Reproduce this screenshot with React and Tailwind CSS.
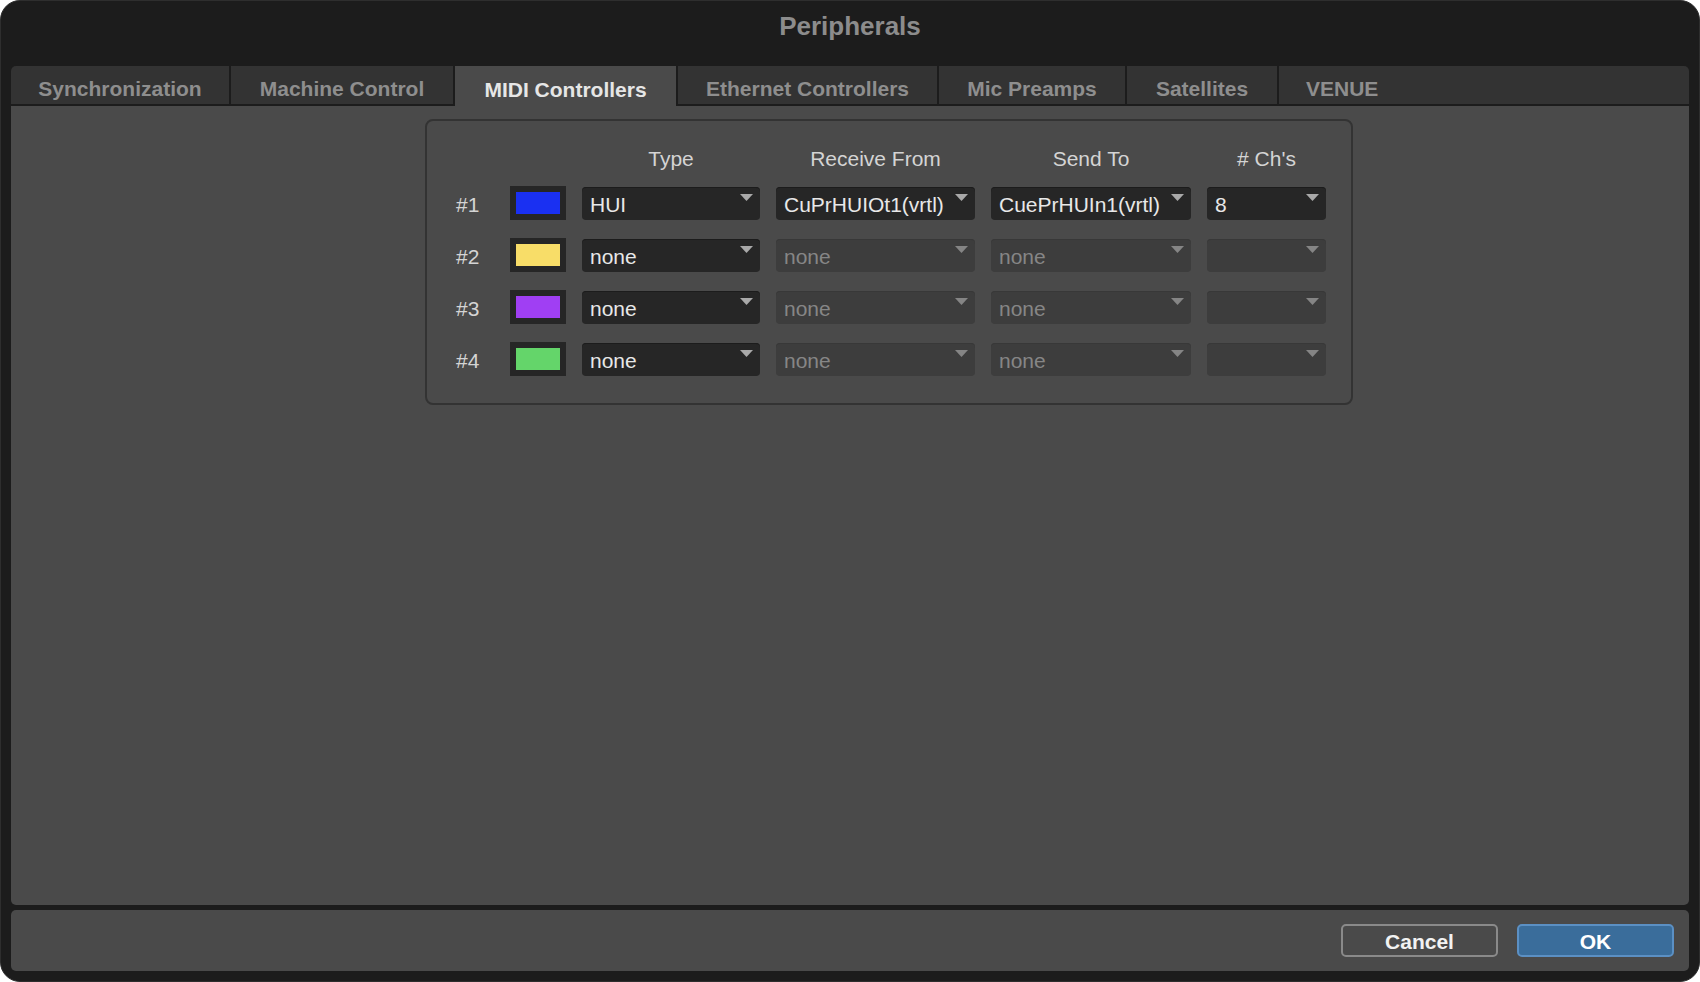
import { Fragment } from 'react'

const TABS = [
    { label: 'Synchronization', w: 'w-[220px]' },
    { label: 'Machine Control', w: 'w-[224px]' },
    { label: 'MIDI Controllers', w: 'w-[223px]', active: true },
    { label: 'Ethernet Controllers', w: 'w-[261px]' },
    { label: 'Mic Preamps', w: 'w-[188px]' },
    { label: 'Satellites', w: 'w-[152px]' },
]

const ROWS = [
    { n: '#1', color: 'bg-[#1a30f2]', type: 'HUI', recv: 'CuPrHUIOt1(vrtl)', send: 'CuePrHUIn1(vrtl)', ch: '8', enabled: true },
    { n: '#2', color: 'bg-[#f8dd68]', type: 'none', recv: 'none', send: 'none', ch: '' },
    { n: '#3', color: 'bg-[#a03ff3]', type: 'none', recv: 'none', send: 'none', ch: '' },
    { n: '#4', color: 'bg-[#64d56a]', type: 'none', recv: 'none', send: 'none', ch: '' },
]

function Arrow({ dim }) {
    return (
        <svg width="13" height="7" viewBox="0 0 13 7" className="absolute right-[7px] top-[7px]">
            <polygon points="0,0 13,0 6.5,7" fill={dim ? '#858585' : '#a9a9a9'} />
        </svg>
    )
}

function Dropdown({ value, on }) {
    return (
        <div
            className={
                'relative h-[33px] rounded-[4px] flex items-center pl-[8px] pt-[3px] text-[21px] leading-none ' +
                (on
                    ? 'bg-[#262626] text-[#e8e8e8] shadow-[inset_0_1px_0_#1c1c1c]'
                    : 'bg-[#3d3d3d] text-[#868686] shadow-[inset_0_1px_0_#383838]')
            }
        >
            {value}
            <Arrow dim={!on} />
        </div>
    )
}

export default function App() {
    return (
        <div className="w-[1700px] h-[982px] bg-white" style={{ fontFamily: '"Liberation Sans", Arial, sans-serif' }}>
            <div className="w-full h-full rounded-[20px] bg-[#1c1c1c] border border-[#2e2e2e] flex flex-col px-[10px] pb-[10px]">
                {/* Title */}
                <div className="h-[65px] flex justify-center pt-[10px]">
                    <span className="text-[26px] leading-[30px] font-bold text-[#8c8c8c]">Peripherals</span>
                </div>

                {/* Tabs */}
                <div className="h-[40px] flex">
                    {TABS.map((t, i) => (
                        <div
                            key={t.label}
                            className={
                                t.w +
                                ' flex justify-center items-center pt-[7px] text-[21px] font-bold border-r-2 border-[#1c1c1c] ' +
                                (i === 0 ? 'rounded-tl-[5px] ' : '') +
                                (t.active
                                    ? 'bg-[#4a4a4a] text-[#e6e6e6]'
                                    : 'bg-[#333333] text-[#8e8e8e] border-b-2')
                            }
                        >
                            {t.label}
                        </div>
                    ))}
                    <div className="flex-1 flex items-center pt-[7px] pl-[27px] text-[21px] font-bold bg-[#333333] text-[#8e8e8e] border-b-2 border-[#1c1c1c] rounded-tr-[5px]">
                        VENUE
                    </div>
                </div>

                {/* Content */}
                <div className="flex-1 bg-[#4a4a4a] rounded-b-[5px] pt-[13px] pl-[414px]">
                    <div className="w-[928px] rounded-[8px] border-2 border-[#333333] pl-[29px] pt-[24px] pb-[27px]">
                        <div className="grid grid-cols-[38px_56px_178px_199px_200px_119px] gap-x-[16px] h-[28px] mb-[13px] text-[21px] leading-[28px] text-[#d4d4d4]">
                            <div />
                            <div />
                            <div className="text-center">Type</div>
                            <div className="text-center">Receive From</div>
                            <div className="text-center">Send To</div>
                            <div className="text-center">{"# Ch's"}</div>
                        </div>
                        <div className="flex flex-col gap-y-[18px]">
                            {ROWS.map((r) => (
                                <div key={r.n} className="h-[34px] grid grid-cols-[38px_56px_178px_199px_200px_119px] gap-x-[16px] items-center">
                                    <div className="text-[21px] leading-none text-[#d4d4d4] pt-[3px]">{r.n}</div>
                                    <div className="h-[34px] bg-[#262626] p-[6px]">
                                        <div className={'w-full h-full ' + r.color} />
                                    </div>
                                    <Dropdown value={r.type} on />
                                    <Dropdown value={r.recv} on={r.enabled} />
                                    <Dropdown value={r.send} on={r.enabled} />
                                    <Dropdown value={r.ch} on={r.enabled} />
                                </div>
                            ))}
                        </div>
                    </div>
                </div>

                {/* Footer */}
                <div className="h-[61px] mt-[5px] bg-[#4a4a4a] rounded-[5px] flex items-center justify-end pr-[15px] gap-[19px]">
                    <button className="w-[157px] h-[33px] rounded-[5px] border-2 border-[#8a8a8a] text-[21px] font-bold text-[#f2f2f2] flex items-center justify-center pt-[2px]">
                        Cancel
                    </button>
                    <button className="w-[157px] h-[33px] rounded-[5px] border-2 border-[#5b90c4] bg-[#3a6d9b] text-[21px] font-bold text-white flex items-center justify-center pt-[2px]">
                        OK
                    </button>
                </div>
            </div>
        </div>
    )
}
